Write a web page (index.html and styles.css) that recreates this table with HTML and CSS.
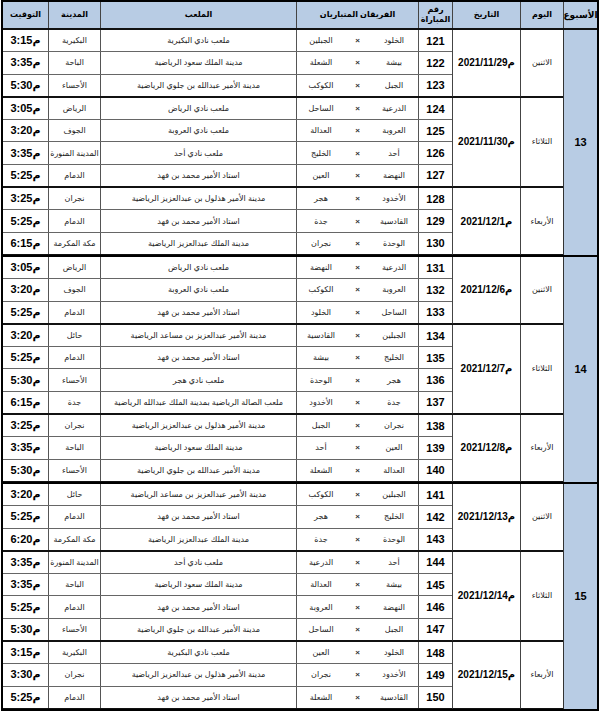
FILE: index.html
```html
<!DOCTYPE html>
<html lang="ar" dir="rtl">
<head>
<meta charset="utf-8">
<title>جدول المباريات</title>
<link rel="stylesheet" href="styles.css">
</head>
<body>
<div class="sched">
  <div class="head">
    <div class="h h-wk">الأسبوع</div>
    <div class="h h-dy">اليوم</div>
    <div class="h h-dt">التاريخ</div>
    <div class="h h-n">رقم<br>المباراة</div>
    <div class="h h-tm2">الفريقان المتباريان</div>
    <div class="h h-st">الملعب</div>
    <div class="h h-ct">المدينة</div>
    <div class="h h-tm">التوقيت</div>
  </div>

  <div class="week">
    <div class="wk">13</div>
    <div class="days">
      <div class="day">
        <div class="dy">الاثنين</div>
        <div class="dt">2021/11/29م</div>
        <div class="matches">
          <div class="m"><span class="n">121</span><span class="t1">الخلود</span><span class="vs">×</span><span class="t2">الجبلين</span><span class="st">ملعب نادي البكيرية</span><span class="ct">البكيرية</span><span class="tm">3:15م</span></div>
          <div class="m"><span class="n">122</span><span class="t1">بيشة</span><span class="vs">×</span><span class="t2">الشعلة</span><span class="st">مدينة الملك سعود الرياضية</span><span class="ct">الباحة</span><span class="tm">3:35م</span></div>
          <div class="m"><span class="n">123</span><span class="t1">الجبل</span><span class="vs">×</span><span class="t2">الكوكب</span><span class="st">مدينة الأمير عبدالله بن جلوي الرياضية</span><span class="ct">الأحساء</span><span class="tm">5:30م</span></div>
        </div>
      </div>
      <div class="day">
        <div class="dy">الثلاثاء</div>
        <div class="dt">2021/11/30م</div>
        <div class="matches">
          <div class="m"><span class="n">124</span><span class="t1">الدرعية</span><span class="vs">×</span><span class="t2">الساحل</span><span class="st">ملعب نادي الرياض</span><span class="ct">الرياض</span><span class="tm">3:05م</span></div>
          <div class="m"><span class="n">125</span><span class="t1">العروبة</span><span class="vs">×</span><span class="t2">العدالة</span><span class="st">ملعب نادي العروبة</span><span class="ct">الجوف</span><span class="tm">3:20م</span></div>
          <div class="m"><span class="n">126</span><span class="t1">أحد</span><span class="vs">×</span><span class="t2">الخليج</span><span class="st">ملعب نادي أحد</span><span class="ct">المدينة المنورة</span><span class="tm">3:35م</span></div>
          <div class="m"><span class="n">127</span><span class="t1">النهضة</span><span class="vs">×</span><span class="t2">العين</span><span class="st">استاد الأمير محمد بن فهد</span><span class="ct">الدمام</span><span class="tm">5:25م</span></div>
        </div>
      </div>
      <div class="day">
        <div class="dy">الأربعاء</div>
        <div class="dt">2021/12/1م</div>
        <div class="matches">
          <div class="m"><span class="n">128</span><span class="t1">الأخدود</span><span class="vs">×</span><span class="t2">هجر</span><span class="st">مدينة الأمير هذلول بن عبدالعزيز الرياضية</span><span class="ct">نجران</span><span class="tm">3:25م</span></div>
          <div class="m"><span class="n">129</span><span class="t1">القادسية</span><span class="vs">×</span><span class="t2">جدة</span><span class="st">استاد الأمير محمد بن فهد</span><span class="ct">الدمام</span><span class="tm">5:25م</span></div>
          <div class="m"><span class="n">130</span><span class="t1">الوحدة</span><span class="vs">×</span><span class="t2">نجران</span><span class="st">مدينة الملك عبدالعزيز الرياضية</span><span class="ct">مكة المكرمة</span><span class="tm">6:15م</span></div>
        </div>
      </div>
    </div>
  </div>

  <div class="week">
    <div class="wk">14</div>
    <div class="days">
      <div class="day">
        <div class="dy">الاثنين</div>
        <div class="dt">2021/12/6م</div>
        <div class="matches">
          <div class="m"><span class="n">131</span><span class="t1">الدرعية</span><span class="vs">×</span><span class="t2">النهضة</span><span class="st">ملعب نادي الرياض</span><span class="ct">الرياض</span><span class="tm">3:05م</span></div>
          <div class="m"><span class="n">132</span><span class="t1">العروبة</span><span class="vs">×</span><span class="t2">الكوكب</span><span class="st">ملعب نادي العروبة</span><span class="ct">الجوف</span><span class="tm">3:20م</span></div>
          <div class="m"><span class="n">133</span><span class="t1">الساحل</span><span class="vs">×</span><span class="t2">الخلود</span><span class="st">استاد الأمير محمد بن فهد</span><span class="ct">الدمام</span><span class="tm">5:25م</span></div>
        </div>
      </div>
      <div class="day">
        <div class="dy">الثلاثاء</div>
        <div class="dt">2021/12/7م</div>
        <div class="matches">
          <div class="m"><span class="n">134</span><span class="t1">الجبلين</span><span class="vs">×</span><span class="t2">القادسية</span><span class="st">مدينة الأمير عبدالعزيز بن مساعد الرياضية</span><span class="ct">حائل</span><span class="tm">3:20م</span></div>
          <div class="m"><span class="n">135</span><span class="t1">الخليج</span><span class="vs">×</span><span class="t2">بيشة</span><span class="st">استاد الأمير محمد بن فهد</span><span class="ct">الدمام</span><span class="tm">5:25م</span></div>
          <div class="m"><span class="n">136</span><span class="t1">هجر</span><span class="vs">×</span><span class="t2">الوحدة</span><span class="st">ملعب نادي هجر</span><span class="ct">الأحساء</span><span class="tm">5:30م</span></div>
          <div class="m"><span class="n">137</span><span class="t1">جدة</span><span class="vs">×</span><span class="t2">الأخدود</span><span class="st">ملعب الصالة الرياضية بمدينة الملك عبدالله الرياضية</span><span class="ct">جدة</span><span class="tm">6:15م</span></div>
        </div>
      </div>
      <div class="day">
        <div class="dy">الأربعاء</div>
        <div class="dt">2021/12/8م</div>
        <div class="matches">
          <div class="m"><span class="n">138</span><span class="t1">نجران</span><span class="vs">×</span><span class="t2">الجبل</span><span class="st">مدينة الأمير هذلول بن عبدالعزيز الرياضية</span><span class="ct">نجران</span><span class="tm">3:25م</span></div>
          <div class="m"><span class="n">139</span><span class="t1">العين</span><span class="vs">×</span><span class="t2">أحد</span><span class="st">مدينة الملك سعود الرياضية</span><span class="ct">الباحة</span><span class="tm">3:35م</span></div>
          <div class="m"><span class="n">140</span><span class="t1">العدالة</span><span class="vs">×</span><span class="t2">الشعلة</span><span class="st">مدينة الأمير عبدالله بن جلوي الرياضية</span><span class="ct">الأحساء</span><span class="tm">5:30م</span></div>
        </div>
      </div>
    </div>
  </div>

  <div class="week">
    <div class="wk">15</div>
    <div class="days">
      <div class="day">
        <div class="dy">الاثنين</div>
        <div class="dt">2021/12/13م</div>
        <div class="matches">
          <div class="m"><span class="n">141</span><span class="t1">الجبلين</span><span class="vs">×</span><span class="t2">الكوكب</span><span class="st">مدينة الأمير عبدالعزيز بن مساعد الرياضية</span><span class="ct">حائل</span><span class="tm">3:20م</span></div>
          <div class="m"><span class="n">142</span><span class="t1">الخليج</span><span class="vs">×</span><span class="t2">هجر</span><span class="st">استاد الأمير محمد بن فهد</span><span class="ct">الدمام</span><span class="tm">5:25م</span></div>
          <div class="m"><span class="n">143</span><span class="t1">الوحدة</span><span class="vs">×</span><span class="t2">جدة</span><span class="st">مدينة الملك عبدالعزيز الرياضية</span><span class="ct">مكة المكرمة</span><span class="tm">6:20م</span></div>
        </div>
      </div>
      <div class="day">
        <div class="dy">الثلاثاء</div>
        <div class="dt">2021/12/14م</div>
        <div class="matches">
          <div class="m"><span class="n">144</span><span class="t1">أحد</span><span class="vs">×</span><span class="t2">الدرعية</span><span class="st">ملعب نادي أحد</span><span class="ct">المدينة المنورة</span><span class="tm">3:35م</span></div>
          <div class="m"><span class="n">145</span><span class="t1">بيشة</span><span class="vs">×</span><span class="t2">العدالة</span><span class="st">مدينة الملك سعود الرياضية</span><span class="ct">الباحة</span><span class="tm">3:35م</span></div>
          <div class="m"><span class="n">146</span><span class="t1">النهضة</span><span class="vs">×</span><span class="t2">العروبة</span><span class="st">استاد الأمير محمد بن فهد</span><span class="ct">الدمام</span><span class="tm">5:25م</span></div>
          <div class="m"><span class="n">147</span><span class="t1">الجبل</span><span class="vs">×</span><span class="t2">الساحل</span><span class="st">مدينة الأمير عبدالله بن جلوي الرياضية</span><span class="ct">الأحساء</span><span class="tm">5:30م</span></div>
        </div>
      </div>
      <div class="day">
        <div class="dy">الأربعاء</div>
        <div class="dt">2021/12/15م</div>
        <div class="matches">
          <div class="m"><span class="n">148</span><span class="t1">الخلود</span><span class="vs">×</span><span class="t2">العين</span><span class="st">ملعب نادي البكيرية</span><span class="ct">البكيرية</span><span class="tm">3:15م</span></div>
          <div class="m"><span class="n">149</span><span class="t1">الأخدود</span><span class="vs">×</span><span class="t2">نجران</span><span class="st">مدينة الأمير هذلول بن عبدالعزيز الرياضية</span><span class="ct">نجران</span><span class="tm">3:30م</span></div>
          <div class="m"><span class="n">150</span><span class="t1">القادسية</span><span class="vs">×</span><span class="t2">الشعلة</span><span class="st">استاد الأمير محمد بن فهد</span><span class="ct">الدمام</span><span class="tm">5:25م</span></div>
        </div>
      </div>
    </div>
  </div>
</div>
</body>
</html>
```

FILE: styles.css
```css
* { box-sizing: border-box; }

body {
  margin: 0;
  background: #ffffff;
  font-family: "Liberation Sans", "DejaVu Sans", sans-serif;
  color: #000;
}

.sched {
  direction: rtl;
  width: 598px;
  margin-left: 1px;
  border: 2px solid #000;
}

/* header */
.head {
  display: flex;
  height: 28px;
  background: #b8cce4;
  border-bottom: 2px solid #111;
}
.h {
  display: flex;
  align-items: center;
  justify-content: center;
  text-align: center;
  font-weight: bold;
  font-size: 8px;
  line-height: 10px;
  border-left: 1px solid #444;
  flex: none;
}
.h-wk { width: 34px; font-size: 9px; }
.h-dy { width: 43px; }
.h-dt { width: 68px; }
.h-n { width: 34px; }
.h-tm2 { width: 122px; }
.h-st { width: 196px; }
.h-ct { width: 52px; }
.h-tm { flex: 1; border-left: none; }

/* week groups */
.week { display: flex; }
.week + .week { border-top: 2px solid #000; }

.wk {
  width: 34px;
  flex: none;
  background: #b8cce4;
  border-left: 1px solid #333;
  display: flex;
  align-items: center;
  justify-content: center;
  font-weight: bold;
  font-size: 11px;
}

.days {
  flex: 1;
  display: flex;
  flex-direction: column;
}

/* day groups */
.day { display: flex; }
.day + .day { border-top: 1px solid #111; }

.dy, .dt {
  flex: none;
  display: flex;
  align-items: center;
  justify-content: center;
  border-left: 1px solid #444;
  border-bottom: 1px solid #111;
}
.dy { width: 43px; font-size: 8px; color: #1a1a1a; }
.dt { width: 68px; font-size: 10px; font-weight: bold; direction: ltr; }

.matches {
  flex: 1;
  display: flex;
  flex-direction: column;
}

/* match rows */
.m {
  display: flex;
  height: 22.3px;
  border-bottom: 1px solid #666;
}
.m:last-child { border-bottom-color: #111; }

.m > span {
  flex: none;
  display: flex;
  align-items: center;
  justify-content: center;
  white-space: nowrap;
  border-left: 1px solid #555;
  font-size: 8px;
  color: #222;
}

.m > .n { width: 34px; font-size: 11px; font-weight: bold; color: #000; }
.m > .t1 { width: 48px; border-left: none; }
.m > .vs { width: 25px; border-left: none; font-size: 8px; font-weight: bold; color: #333; }
.m > .t2 { width: 49px; }
.m > .st { width: 196px; }
.m > .ct { width: 52px; }
.m > .tm { flex: 1; border-left: none; font-size: 11px; font-weight: bold; color: #000; direction: ltr; }
```
